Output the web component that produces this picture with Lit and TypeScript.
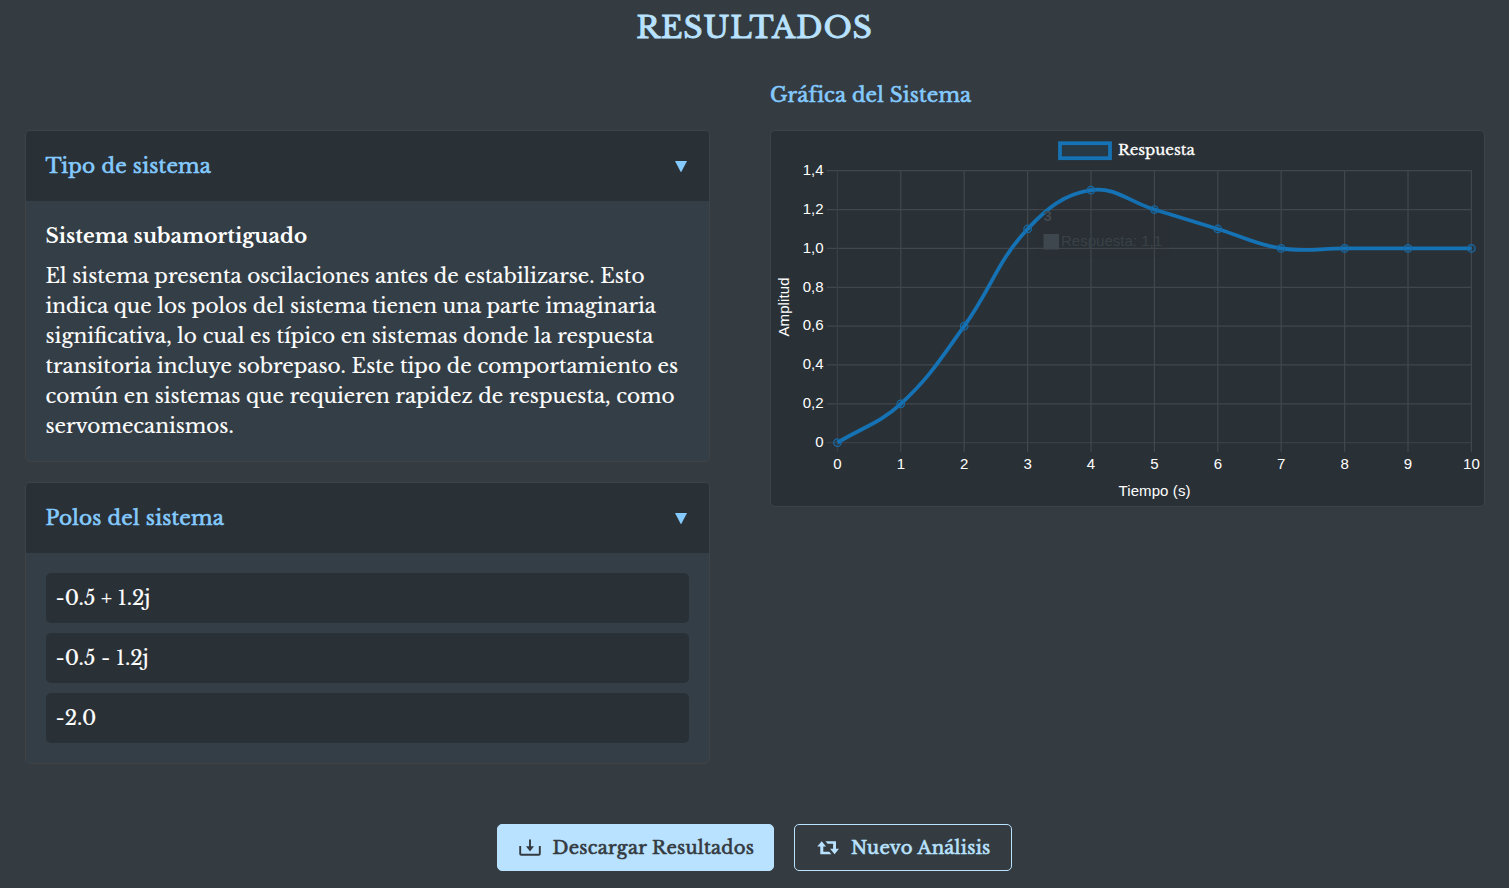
import { LitElement, html, svg, css } from "lit";
import { customElement, property } from "lit/decorators.js";

const SERIF = css`"Libre Baskerville", "Liberation Serif", serif`;

@customElement("response-chart")
class ResponseChart extends LitElement {
  static styles = css`
    :host { display: block; height: 375px; }
    svg { display: block; width: 713px; height: 375px; }
    .tick { font: 15px "Liberation Sans", Arial, sans-serif; fill: #fff; }
    .legend { font: 15px ${SERIF}; fill: #fff; stroke: #fff; stroke-width: .3; }
    .tip { font: 15px "Liberation Sans", Arial, sans-serif; fill: #3a4248; }
    .b { font-weight: 700; fill: #41494f; }
    .grid { stroke: #41474d; stroke-width: 1.25; }
    .axis { stroke: #393f45; stroke-width: 1.25; }
    .line { fill: none; stroke: #1572b4; stroke-width: 3.75; }
    .pt { fill: rgba(21,114,180,.12); stroke: #1769a5; stroke-width: 1.25; }
    .key { fill: rgba(21,114,180,.12); stroke: #1572b4; stroke-width: 3.75; }
  `;
  data = [0, 0.2, 0.6, 1.1, 1.3, 1.2, 1.1, 1, 1, 1, 1];
  px(i: number) { return 837.4 + i * 63.4; }
  py(v: number) { return 442.7 - v * (272 / 1.4); }
  curve() {
    const p = this.data.map((v, i) => ({ x: this.px(i), y: this.py(v) }));
    const c = p.map((q, i) => {
      const a = p[Math.max(0, i - 1)], b = p[Math.min(p.length - 1, i + 1)];
      const d0 = Math.hypot(q.x - a.x, q.y - a.y), d1 = Math.hypot(b.x - q.x, b.y - q.y);
      const f0 = 0.4 * d0 / (d0 + d1), f1 = 0.4 * d1 / (d0 + d1);
      return {
        ax: q.x - f0 * (b.x - a.x), ay: q.y - f0 * (b.y - a.y),
        bx: q.x + f1 * (b.x - a.x), by: q.y + f1 * (b.y - a.y),
      };
    });
    let d = `M${p[0].x} ${p[0].y}`;
    for (let i = 1; i < p.length; i++)
      d += `C${c[i - 1].bx} ${c[i - 1].by} ${c[i].ax} ${c[i].ay} ${p[i].x} ${p[i].y}`;
    return d;
  }
  render() {
    const ys = [0, 0.2, 0.4, 0.6, 0.8, 1, 1.2, 1.4];
    return html`<svg viewBox="771 131 713 375">
      ${ys.map(v => svg`<line class=${v ? "grid" : "axis"} x1="827" x2="1472" y1=${this.py(v)} y2=${this.py(v)}/>
        <text class="tick" x="823.5" y=${this.py(v) + 4.3} text-anchor="end">${v ? v.toFixed(1).replace(".", ",") : "0"}</text>`)}
      ${this.data.map((_, i) => svg`<line class=${i ? "grid" : "axis"} x1=${this.px(i)} x2=${this.px(i)} y1="170.5" y2="452"/>
        <text class="tick" x=${this.px(i)} y="469" text-anchor="middle">${i}</text>`)}
      <path class="line" d=${this.curve()}/>
      ${this.data.map((v, i) => svg`<circle class="pt" cx=${this.px(i)} cy=${this.py(v)} r="3.75"/>`)}
      <rect class="key" x="1060" y="143.2" width="50" height="15"/>
      <text class="legend" x="1118" y="155">Respuesta</text>
      <text class="tick" x="1154.5" y="496" text-anchor="middle" textLength="72">Tiempo (s)</text>
      <text class="tick" transform="translate(789 307) rotate(-90)" text-anchor="middle" textLength="59">Amplitud</text>
      <rect x="1036.5" y="200.5" width="133" height="57" rx="7" fill="rgba(0,0,0,.025)"/>
      <text class="tip b" x="1043.5" y="221">3</text>
      <rect x="1043.5" y="234" width="15.5" height="15.5" fill="#3e474e"/>
      <text class="tip" x="1061" y="246" textLength="101">Respuesta: 1,1</text>
    </svg>`;
  }
}

@customElement("info-panel")
class InfoPanel extends LitElement {
  @property() heading = "";
  static styles = css`
    :host { display: block; border: 1px solid #3f4345; border-radius: 5px; background: #343e46; overflow: hidden; }
    .head { display: flex; align-items: center; justify-content: space-between; height: 70px; padding: 0 22px 0 19.5px; background: #2a3136; box-sizing: border-box; }
    .title { color: #84caff; font-size: 20px; line-height: 30px; letter-spacing: .25px; -webkit-text-stroke: .6px #84caff; }
    .arrow { width: 12px; height: 11.5px; fill: #84caff; margin-top: 1px; }
    .body { padding: 20px 20px 20px 19.5px; }
  `;
  render() {
    return html`<div class="head"><span class="title">${this.heading}</span>
      <svg class="arrow" viewBox="0 0 12 11.5"><path d="M0 0H12L6 11.5Z"/></svg></div>
      <div class="body"><slot></slot></div>`;
  }
}

@customElement("app-root")
class AppRoot extends LitElement {
  static styles = css`
    :host { display: flex; flex-direction: column; box-sizing: border-box; width: 1509px; height: 888px; overflow: hidden; background: #353c41; color: #fff; font-family: ${SERIF}; font-size: 20px; line-height: 30px; }
    .title { text-align: center; height: 52px; line-height: 56px; font-size: 30px; letter-spacing: .8px; color: #b8e2ff; -webkit-text-stroke: .9px #b8e2ff; }
    .cols { display: grid; grid-template-columns: 685px 715px; column-gap: 60px; padding: 0 25px; height: 772px; box-sizing: border-box; }
    .left { padding-top: 78px; display: flex; flex-direction: column; gap: 20px; }
    .graph { padding-top: 28px; }
    .gtitle { color: #84caff; height: 50px; letter-spacing: .16px; -webkit-text-stroke: .6px #84caff; }
    .card { border: 1px solid #3f4345; border-radius: 5px; background: #2a3136; }
    .strong { font-weight: 700; padding-bottom: 10px; }
    .para { height: 180px; white-space: nowrap; -webkit-text-stroke: .15px #fff; }
    .poles { display: grid; gap: 10px; padding-left: .5px; }
    .pole { height: 50px; line-height: 50px; padding-left: 9.5px; border-radius: 5px; background: #2a3136; -webkit-text-stroke: .15px #fff; }
    .actions { display: flex; justify-content: center; gap: 20px; }
    .btn { display: flex; align-items: center; box-sizing: border-box; height: 47px; border: 1px solid #b8e2ff; border-radius: 5px; font-size: 18px; letter-spacing: .29px; white-space: nowrap; }
    .icon { width: 24px; height: 24px; }
    .fill { width: 277px; padding-left: 20px; gap: 10.5px; background: #b8e2ff; color: #343a40; -webkit-text-stroke: .6px #343a40; }
    .line { width: 218px; padding-left: 21px; gap: 11px; color: #b8e2ff; -webkit-text-stroke: .6px #b8e2ff; }
  `;
  lines = [
    "El sistema presenta oscilaciones antes de estabilizarse. Esto",
    "indica que los polos del sistema tienen una parte imaginaria",
    "significativa, lo cual es típico en sistemas donde la respuesta",
    "transitoria incluye sobrepaso. Este tipo de comportamiento es",
    "común en sistemas que requieren rapidez de respuesta, como",
    "servomecanismos.",
  ];
  poles = ["-0.5 + 1.2j", "-0.5 - 1.2j", "-2.0"];
  render() {
    return html`
      <div class="title">RESULTADOS</div>
      <div class="cols">
        <div class="left">
          <info-panel heading="Tipo de sistema">
            <div class="strong">Sistema subamortiguado</div>
            <div class="para">${this.lines.map(t => html`<div>${t}</div>`)}</div>
          </info-panel>
          <info-panel heading="Polos del sistema">
            <div class="poles">${this.poles.map(t => html`<div class="pole">${t}</div>`)}</div>
          </info-panel>
        </div>
        <div class="graph">
          <div class="gtitle">Gráfica del Sistema</div>
          <div class="card"><response-chart></response-chart></div>
        </div>
      </div>
      <div class="actions">
        <div class="btn fill">
          <svg class="icon" viewBox="0 0 24 24" fill="none" stroke="#343a40" stroke-width="1.9"><path d="M2.2 10V17.8Q2.2 18.8 3.2 18.8H20.8Q21.8 18.8 21.8 17.8V10M12 3.5V11.5"/><path d="M8 10.3H16L12 15.5Z" fill="#343a40" stroke="none"/></svg>
          <span>Descargar Resultados</span>
        </div>
        <div class="btn line">
          <svg class="icon" viewBox="0 0 24 24"><path fill="#b8e2ff" d="M5.7 5.2 10 10.5H7.3V15.8H13.2L15.4 18.3H4.3V10.5H1.3ZM9.5 5.2H20V12.7H23L18.6 18.2 14.1 12.7H17.1V7.8H11.6Z"/></svg>
          <span>Nuevo Análisis</span>
        </div>
      </div>`;
  }
}
